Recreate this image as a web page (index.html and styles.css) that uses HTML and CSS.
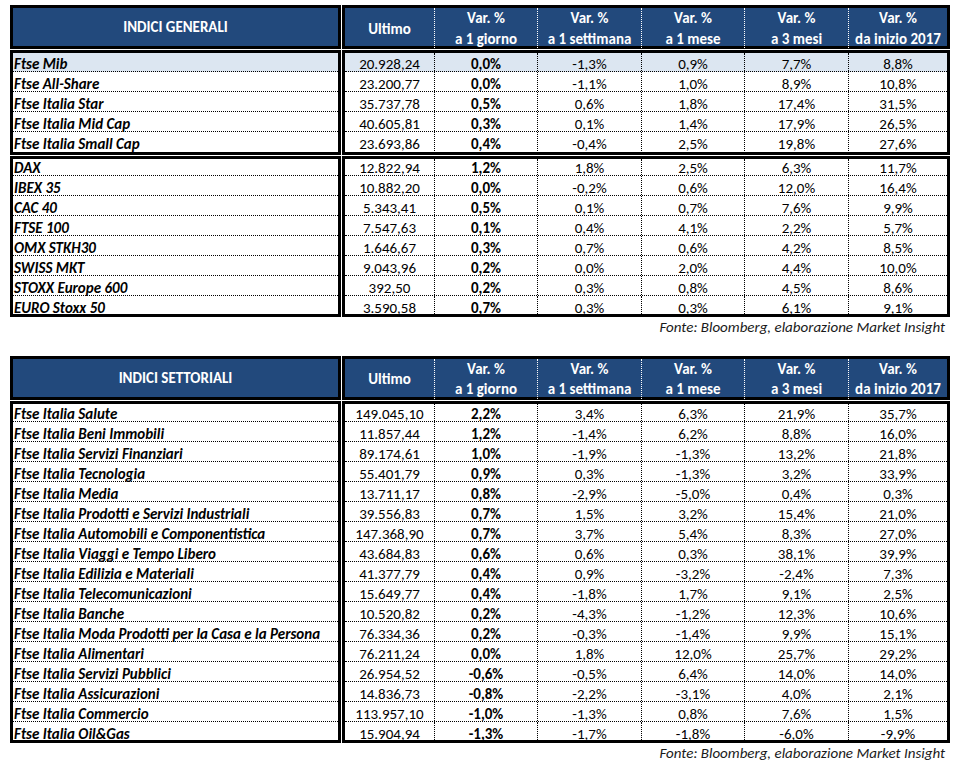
FILE: index.html
```html
<!DOCTYPE html>
<html lang="it">
<head>
<meta charset="utf-8">
<title>Indici</title>
<link rel="stylesheet" href="styles.css">
</head>
<body>
<div class="report">
  <section class="tbl">
    <div class="grp head">
      <div class="box names"><div class="hcell">INDICI GENERALI</div></div>
      <div class="box vals">
        <div class="hcell">Ultimo</div>
        <div class="hcell">Var. %<br>a 1 giorno</div>
        <div class="hcell">Var. %<br>a 1 settimana</div>
        <div class="hcell">Var. %<br>a 1 mese</div>
        <div class="hcell">Var. %<br>a 3 mesi</div>
        <div class="hcell">Var. %<br>da inizio 2017</div>
      </div>
    </div>
    <div class="grp">
      <div class="box names">
        <div class="row hl h19">Ftse Mib</div>
        <div class="row">Ftse All-Share</div>
        <div class="row">Ftse Italia Star</div>
        <div class="row">Ftse Italia Mid Cap</div>
        <div class="row last">Ftse Italia Small Cap</div>
      </div>
      <div class="box vals">
        <div class="row hl h19"><span>20.928,24</span><b>0,0%</b><span>-1,3%</span><span>0,9%</span><span>7,7%</span><span>8,8%</span></div>
        <div class="row"><span>23.200,77</span><b>0,0%</b><span>-1,1%</span><span>1,0%</span><span>8,9%</span><span>10,8%</span></div>
        <div class="row"><span>35.737,78</span><b>0,5%</b><span>0,6%</span><span>1,8%</span><span>17,4%</span><span>31,5%</span></div>
        <div class="row"><span>40.605,81</span><b>0,3%</b><span>0,1%</span><span>1,4%</span><span>17,9%</span><span>26,5%</span></div>
        <div class="row last"><span>23.693,86</span><b>0,4%</b><span>-0,4%</span><span>2,5%</span><span>19,8%</span><span>27,6%</span></div>
      </div>
    </div>
    <div class="grp">
      <div class="box names">
        <div class="row h17">DAX</div>
        <div class="row">IBEX 35</div>
        <div class="row">CAC 40</div>
        <div class="row">FTSE 100</div>
        <div class="row">OMX STKH30</div>
        <div class="row">SWISS MKT</div>
        <div class="row">STOXX Europe 600</div>
        <div class="row last h18">EURO Stoxx 50</div>
      </div>
      <div class="box vals">
        <div class="row h17"><span>12.822,94</span><b>1,2%</b><span>1,8%</span><span>2,5%</span><span>6,3%</span><span>11,7%</span></div>
        <div class="row"><span>10.882,20</span><b>0,0%</b><span>-0,2%</span><span>0,6%</span><span>12,0%</span><span>16,4%</span></div>
        <div class="row"><span>5.343,41</span><b>0,5%</b><span>0,1%</span><span>0,7%</span><span>7,6%</span><span>9,9%</span></div>
        <div class="row"><span>7.547,63</span><b>0,1%</b><span>0,4%</span><span>4,1%</span><span>2,2%</span><span>5,7%</span></div>
        <div class="row"><span>1.646,67</span><b>0,3%</b><span>0,7%</span><span>0,6%</span><span>4,2%</span><span>8,5%</span></div>
        <div class="row"><span>9.043,96</span><b>0,2%</b><span>0,0%</span><span>2,0%</span><span>4,4%</span><span>10,0%</span></div>
        <div class="row"><span>392,50</span><b>0,2%</b><span>0,3%</span><span>0,8%</span><span>4,5%</span><span>8,6%</span></div>
        <div class="row last h18"><span>3.590,58</span><b>0,7%</b><span>0,3%</span><span>0,3%</span><span>6,1%</span><span>9,1%</span></div>
      </div>
    </div>
  </section>
  <p class="src">Fonte: Bloomberg, elaborazione Market Insight</p>

  <section class="tbl second">
    <div class="grp head">
      <div class="box names"><div class="hcell">INDICI SETTORIALI</div></div>
      <div class="box vals">
        <div class="hcell">Ultimo</div>
        <div class="hcell">Var. %<br>a 1 giorno</div>
        <div class="hcell">Var. %<br>a 1 settimana</div>
        <div class="hcell">Var. %<br>a 1 mese</div>
        <div class="hcell">Var. %<br>a 3 mesi</div>
        <div class="hcell">Var. %<br>da inizio 2017</div>
      </div>
    </div>
    <div class="grp">
      <div class="box names">
        <div class="row h18">Ftse Italia Salute</div>
        <div class="row">Ftse Italia Beni Immobili</div>
        <div class="row">Ftse Italia Servizi Finanziari</div>
        <div class="row">Ftse Italia Tecnologia</div>
        <div class="row">Ftse Italia Media</div>
        <div class="row">Ftse Italia Prodotti e Servizi Industriali</div>
        <div class="row">Ftse Italia Automobili e Componentistica</div>
        <div class="row">Ftse Italia Viaggi e Tempo Libero</div>
        <div class="row">Ftse Italia Edilizia e Materiali</div>
        <div class="row">Ftse Italia Telecomunicazioni</div>
        <div class="row">Ftse Italia Banche</div>
        <div class="row">Ftse Italia Moda Prodotti per la Casa e la Persona</div>
        <div class="row">Ftse Italia Alimentari</div>
        <div class="row">Ftse Italia Servizi Pubblici</div>
        <div class="row">Ftse Italia Assicurazioni</div>
        <div class="row">Ftse Italia Commercio</div>
        <div class="row last h18">Ftse Italia Oil&amp;Gas</div>
      </div>
      <div class="box vals">
        <div class="row h18"><span>149.045,10</span><b>2,2%</b><span>3,4%</span><span>6,3%</span><span>21,9%</span><span>35,7%</span></div>
        <div class="row"><span>11.857,44</span><b>1,2%</b><span>-1,4%</span><span>6,2%</span><span>8,8%</span><span>16,0%</span></div>
        <div class="row"><span>89.174,61</span><b>1,0%</b><span>-1,9%</span><span>-1,3%</span><span>13,2%</span><span>21,8%</span></div>
        <div class="row"><span>55.401,79</span><b>0,9%</b><span>0,3%</span><span>-1,3%</span><span>3,2%</span><span>33,9%</span></div>
        <div class="row"><span>13.711,17</span><b>0,8%</b><span>-2,9%</span><span>-5,0%</span><span>0,4%</span><span>0,3%</span></div>
        <div class="row"><span>39.556,83</span><b>0,7%</b><span>1,5%</span><span>3,2%</span><span>15,4%</span><span>21,0%</span></div>
        <div class="row"><span>147.368,90</span><b>0,7%</b><span>3,7%</span><span>5,4%</span><span>8,3%</span><span>27,0%</span></div>
        <div class="row"><span>43.684,83</span><b>0,6%</b><span>0,6%</span><span>0,3%</span><span>38,1%</span><span>39,9%</span></div>
        <div class="row"><span>41.377,79</span><b>0,4%</b><span>0,9%</span><span>-3,2%</span><span>-2,4%</span><span>7,3%</span></div>
        <div class="row"><span>15.649,77</span><b>0,4%</b><span>-1,8%</span><span>1,7%</span><span>9,1%</span><span>2,5%</span></div>
        <div class="row"><span>10.520,82</span><b>0,2%</b><span>-4,3%</span><span>-1,2%</span><span>12,3%</span><span>10,6%</span></div>
        <div class="row"><span>76.334,36</span><b>0,2%</b><span>-0,3%</span><span>-1,4%</span><span>9,9%</span><span>15,1%</span></div>
        <div class="row"><span>76.211,24</span><b>0,0%</b><span>1,8%</span><span>12,0%</span><span>25,7%</span><span>29,2%</span></div>
        <div class="row"><span>26.954,52</span><b>-0,6%</b><span>-0,5%</span><span>6,4%</span><span>14,0%</span><span>14,0%</span></div>
        <div class="row"><span>14.836,73</span><b>-0,8%</b><span>-2,2%</span><span>-3,1%</span><span>4,0%</span><span>2,1%</span></div>
        <div class="row"><span>113.957,10</span><b>-1,0%</b><span>-1,3%</span><span>0,8%</span><span>7,6%</span><span>1,5%</span></div>
        <div class="row last h18"><span>15.904,94</span><b>-1,3%</b><span>-1,7%</span><span>-1,8%</span><span>-6,0%</span><span>-9,9%</span></div>
      </div>
    </div>
  </section>
  <p class="src">Fonte: Bloomberg, elaborazione Market Insight</p>
</div>
</body>
</html>
```

FILE: styles.css
```css
* { box-sizing: border-box; }

html, body {
  margin: 0;
  background: #ffffff;
}

body {
  padding: 5px 0 0 10px;
  font-family: Carlito, Calibri, Lato, "Liberation Sans", sans-serif;
  font-size: 15px;
  color: #000000;
}

.report {
  width: 940px;
}

.tbl {
  display: flex;
  flex-direction: column;
  gap: 1px;
}

.tbl.second {
  margin-top: 19px;
}

.grp {
  display: flex;
  gap: 1px;
}

.box {
  border: 3px solid #000000;
}

.names {
  width: 331px;
}

.vals {
  width: 608px;
}

/* header */
.head .box {
  height: 44px;
  background: #22497c;
}

.head .vals {
  display: grid;
  grid-template-columns: 90px 103px 104px 103px 104px 98px;
}

.hcell {
  height: 100%;
  display: flex;
  align-items: center;
  justify-content: center;
  text-align: center;
  color: #ffffff;
  font-weight: 700;
  line-height: 21px;
}

.head .vals .hcell {
  border-right: 1px dotted #ffffff;
}

.head .vals .hcell:last-child {
  border-right: 0;
}

.second .hcell {
  line-height: 20px;
}

/* body rows */
.row {
  height: 20px;
  border-bottom: 1px dotted #000000;
  line-height: 14px;
}

.row.last {
  border-bottom-color: transparent;
}

.row.h17 { height: 17px; }
.row.h18 { height: 18px; }
.row.h19 { height: 19px; }

.row.last.h18 {
  border-bottom: 0;
  line-height: 12px;
}

.row.hl {
  background: #dce6f1;
}

.names .row {
  display: flex;
  align-items: flex-end;
  padding-left: 1px;
  font-weight: 700;
  font-style: italic;
  white-space: nowrap;
}

.vals .row {
  display: grid;
  grid-template-columns: 90px 103px 104px 103px 104px 98px;
}

.vals .row > span,
.vals .row > b {
  display: flex;
  align-items: flex-end;
  justify-content: center;
  border-right: 1px dotted #000000;
}

.vals .row > :last-child {
  border-right: 0;
}

.vals .row > b {
  font-weight: 700;
}

/* source note */
.src {
  margin: 0;
  padding-right: 5px;
  height: 20px;
  line-height: 20px;
  text-align: right;
  font-style: italic;
  color: #1a1a1a;
}
```
